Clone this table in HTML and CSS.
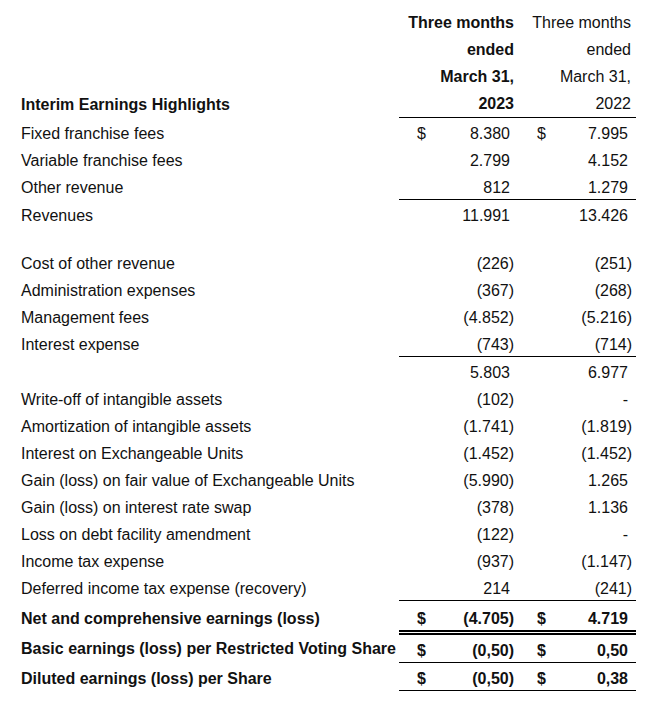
FILE: index.html
```html
<!DOCTYPE html>
<html>
<head>
<meta charset="utf-8">
<link rel="stylesheet" href="styles.css">
</head>
<body>
<table class="fin">
  <colgroup>
    <col class="c-lab"><col class="c-d1"><col class="c-n1"><col class="c-d2"><col class="c-n2">
  </colgroup>
  <thead>
    <tr class="head">
      <th class="lab">Interim Earnings Highlights</th>
      <th colspan="2" class="h cur">Three months<br>ended<br>March 31,<br>2023</th>
      <th colspan="2" class="h prev">Three months<br>ended<br>March 31,<br>2022</th>
    </tr>
  </thead>
  <tbody>
    <tr><td class="lab">Fixed franchise fees</td><td class="d">$</td><td class="n">8.380</td><td class="d">$</td><td class="n">7.995</td></tr>
    <tr><td class="lab">Variable franchise fees</td><td class="d"></td><td class="n">2.799</td><td class="d"></td><td class="n">4.152</td></tr>
    <tr class="rule"><td class="lab">Other revenue</td><td class="d"></td><td class="n">812</td><td class="d"></td><td class="n">1.279</td></tr>
    <tr><td class="lab">Revenues</td><td class="d"></td><td class="n">11.991</td><td class="d"></td><td class="n">13.426</td></tr>
    <tr class="blank"><td colspan="5"></td></tr>
    <tr><td class="lab">Cost of other revenue</td><td class="d"></td><td class="n neg">(226)</td><td class="d"></td><td class="n neg">(251)</td></tr>
    <tr><td class="lab">Administration expenses</td><td class="d"></td><td class="n neg">(367)</td><td class="d"></td><td class="n neg">(268)</td></tr>
    <tr><td class="lab">Management fees</td><td class="d"></td><td class="n neg">(4.852)</td><td class="d"></td><td class="n neg">(5.216)</td></tr>
    <tr class="rule"><td class="lab">Interest expense</td><td class="d"></td><td class="n neg">(743)</td><td class="d"></td><td class="n neg">(714)</td></tr>
    <tr><td class="lab"></td><td class="d"></td><td class="n">5.803</td><td class="d"></td><td class="n">6.977</td></tr>
    <tr><td class="lab">Write-off of intangible assets</td><td class="d"></td><td class="n neg">(102)</td><td class="d"></td><td class="n dash">-</td></tr>
    <tr><td class="lab">Amortization of intangible assets</td><td class="d"></td><td class="n neg">(1.741)</td><td class="d"></td><td class="n neg">(1.819)</td></tr>
    <tr><td class="lab">Interest on Exchangeable Units</td><td class="d"></td><td class="n neg">(1.452)</td><td class="d"></td><td class="n neg">(1.452)</td></tr>
    <tr><td class="lab">Gain (loss) on fair value of Exchangeable Units</td><td class="d"></td><td class="n neg">(5.990)</td><td class="d"></td><td class="n">1.265</td></tr>
    <tr><td class="lab">Gain (loss) on interest rate swap</td><td class="d"></td><td class="n neg">(378)</td><td class="d"></td><td class="n">1.136</td></tr>
    <tr><td class="lab">Loss on debt facility amendment</td><td class="d"></td><td class="n neg">(122)</td><td class="d"></td><td class="n dash">-</td></tr>
    <tr><td class="lab">Income tax expense</td><td class="d"></td><td class="n neg">(937)</td><td class="d"></td><td class="n neg">(1.147)</td></tr>
    <tr class="rule"><td class="lab">Deferred income tax expense (recovery)</td><td class="d"></td><td class="n">214</td><td class="d"></td><td class="n neg">(241)</td></tr>
    <tr class="tot net"><td class="lab">Net and comprehensive earnings (loss)</td><td class="d">$</td><td class="n neg">(4.705)</td><td class="d">$</td><td class="n">4.719</td></tr>
    <tr class="tot rule"><td class="lab">Basic earnings (loss) per Restricted Voting Share</td><td class="d">$</td><td class="n neg">(0,50)</td><td class="d">$</td><td class="n">0,50</td></tr>
    <tr class="tot rule"><td class="lab">Diluted earnings (loss) per Share</td><td class="d">$</td><td class="n neg">(0,50)</td><td class="d">$</td><td class="n">0,38</td></tr>
  </tbody>
</table>
</body>
</html>
```

FILE: styles.css
```css
html, body {
  margin: 0;
  padding: 0;
  background: #fff;
}

body {
  font-family: "Liberation Sans", Arial, sans-serif;
  font-size: 16px;
  color: #111;
}

.fin {
  margin-top: 9px;
  border-collapse: collapse;
  border-spacing: 0;
  table-layout: fixed;
  width: 636px;
}

.c-lab { width: 399px; }
.c-d1 { width: 41px; }
.c-n1 { width: 78px; }
.c-d2 { width: 37px; }
.c-n2 { width: 81px; }

.fin th,
.fin td {
  padding: 4px 0 0 0;
  line-height: 23px;
  white-space: nowrap;
  vertical-align: top;
}

.fin .lab {
  text-align: left;
  padding-left: 21px;
}

.head th {
  padding-top: 0;
  line-height: 27px;
  vertical-align: bottom;
}

.head .lab {
  font-weight: bold;
  padding-bottom: 0;
}

.head .h {
  text-align: right;
  border-bottom: 1px solid #000;
}

.head .cur {
  font-weight: bold;
  padding-right: 4px;
}

.head .prev {
  font-weight: normal;
  padding-right: 5px;
}

.fin td.d {
  text-align: left;
}

.fin tr td.d:nth-child(2) {
  padding-left: 18px;
}

.fin tr td.d:nth-child(4) {
  padding-left: 19px;
}

.fin td.n {
  text-align: right;
  padding-right: 8px;
}

.fin td.n.neg {
  padding-right: 4px;
}

.fin td.n.dash {
  padding-right: 8px;
}

.rule td.d,
.rule td.n {
  border-bottom: 1px solid #000;
}

.blank td {
  height: 21px;
  padding: 0;
  line-height: 0;
}

.tot td {
  font-weight: bold;
}

.net td {
  padding-top: 6px;
}

.net td.d,
.net td.n {
  border-bottom: 5px double #000;
}
```
